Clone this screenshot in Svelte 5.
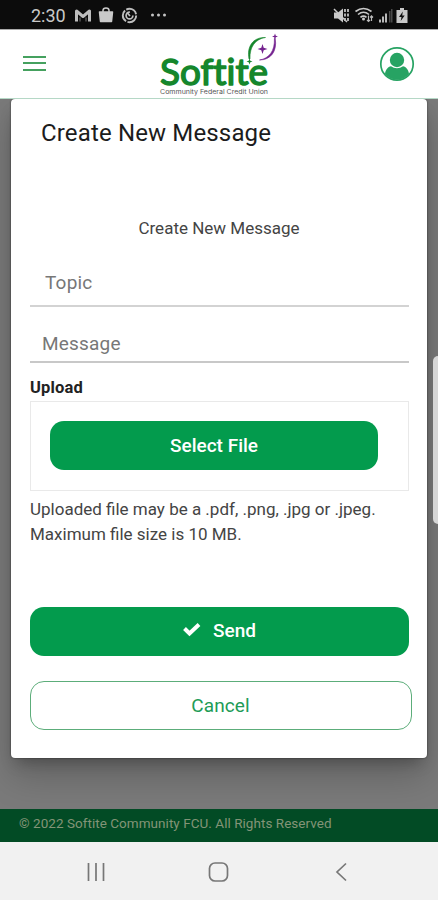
<script lang="ts">
  let topic = $state("");
  let message = $state("");
</script>

<div class="screen">
  <div class="status">
    <span class="clock">2:30</span>
    <svg class="left-icons" width="100" height="30" viewBox="0 0 100 30" aria-hidden="true">
      <path d="M3.500 21.500V11L10 16.500l6.500-5.500v10.500" fill="none" stroke="#bdbdbd" stroke-width="3" stroke-linejoin="round" />
      <path d="M7 21.500v-4M13 21.500v-4" fill="none" stroke="#777" stroke-width="1" />
      <path d="M26.500 12h13l-1 9.500h-11z" fill="#c9c9c9" stroke="#c9c9c9" stroke-width="1.500" stroke-linejoin="round" />
      <path d="M30 12v-1.500a3 2.500 0 0 1 6 0V12" fill="none" stroke="#c9c9c9" stroke-width="1.500" />
      <circle cx="56.500" cy="15.500" r="6.700" fill="none" stroke="#bdbdbd" stroke-width="1.900" stroke-dasharray="12.500 1.500" />
      <circle cx="56.500" cy="15.500" r="3.400" fill="none" stroke="#bdbdbd" stroke-width="1.700" stroke-dasharray="16 5.400" />
      <path d="M54 12.500l3 3.500" stroke="#bdbdbd" stroke-width="1.700" />
      <g fill="#c4c4c4">
        <circle cx="79.500" cy="15" r="1.500" />
        <circle cx="85.500" cy="15" r="1.500" />
        <circle cx="91.500" cy="15" r="1.500" />
      </g>
    </svg>
    <svg class="right-icons" width="80" height="30" viewBox="0 0 80 30" aria-hidden="true">
      <path d="M1 12.500h4l5-4v14l-5-4H1z" fill="#c9c9c9" />
      <path d="M1 9l13 13" stroke="#c9c9c9" stroke-width="1.500" />
      <path d="M12 9v13M15 9v13" stroke="#c0c0c0" stroke-width="1.800" stroke-dasharray="3 1.500" />
      <g fill="none" stroke="#c9c9c9" stroke-width="1.600">
        <path d="M22.500 11.500q8-6 16 0" />
        <path d="M25 14.500q5.500-4.500 11 0" />
        <path d="M27.500 17.300q3-2.500 6 0" />
      </g>
      <circle cx="30.500" cy="19" r="1.500" fill="#c9c9c9" />
      <path d="M35.500 15.500v6M38.500 16v5M34 20l1.500 1.500L37 20M37.200 17.500l1.300-1.500 1.500 1.500" fill="none" stroke="#bbb" stroke-width="1.200" />
      <path d="M46 22.500v-3h2v3zM49 22.500v-6h2v6zM52 22.500v-9h2v9z" fill="#b9b9b9" />
      <path d="M56 22.500V11h1.500v11.500zM58 22.500V9h1.500v13.500z" fill="#4a4a4a" />
      <path d="M67 8h4v2h3.500v13h-11V10H67z" fill="#c9c9c9" />
      <path d="M69.800 11.500L66 17h2.500l-.8 4 4-5.500h-2.500z" fill="#111" />
    </svg>
  </div>

  <header>
    <button class="menu" aria-label="Menu">
      <i></i><i></i><i></i>
    </button>
    <svg class="logo" width="122" height="68" viewBox="0 0 122 68" role="img" aria-label="Softite Community Federal Credit Union">
      <text class="brand" x="2" y="54.500" textLength="108" lengthAdjust="spacingAndGlyphs">Softite</text>
      <text class="tagline" x="2" y="63.500" textLength="108" lengthAdjust="spacingAndGlyphs">Community Federal Credit Union</text>
      <path d="M91 29C88.500 16 95.500 7 107.500 7.500 97.500 9 91.500 16.500 92 29z" fill="#15872c" stroke="#15872c" stroke-width=".6" />
      <path d="M117.200 8.500C119.500 21.500 112.500 30 101.500 30 111 28.500 117 21 116.400 8.500z" fill="#74228f" stroke="#74228f" stroke-width=".6" />
      <path d="M104.500 14l1.200 3.800 3.800 1.200-3.800 1.200-1.200 3.800-1.200-3.800-3.800-1.200 3.800-1.200z" fill="#74228f" />
      <path d="M117 3.500l.8 2.200 2.200.8-2.200.8-.8 2.200-.8-2.200-2.200-.8 2.200-.8z" fill="#74228f" />
      <path d="M91.500 28.500l.8 2.200 2.200.8-2.200.8-.8 2.200-.8-2.200-2.200-.8 2.200-.8z" fill="#15872c" />
    </svg>
    <svg class="avatar" width="36" height="36" viewBox="0 0 36 36" aria-hidden="true">
      <circle cx="18" cy="18" r="16.200" fill="#fff" stroke="#27a363" stroke-width="1.700" />
      <circle cx="18" cy="14" r="7.200" fill="#27a363" />
      <path d="M6 28c.5-4.500 3-7 6-7.700 3.500 2.600 8.500 2.600 12 0 3 .7 5.500 3.200 6 7.700a15.500 15.500 0 0 1-24 0z" fill="#27a363" />
    </svg>
  </header>

  <main>
    <div class="modal" role="dialog" aria-label="Create New Message">
      <h1>Create New Message</h1>
      <h2>Create New Message</h2>
      <input class="topic" placeholder="Topic" bind:value={topic} />
      <input class="message" placeholder="Message" bind:value={message} />
      <div class="label">Upload</div>
      <div class="upload">
        <button class="primary">Select File</button>
      </div>
      <p class="hint">Uploaded file may be a .pdf, .png, .jpg or .jpeg.<br />Maximum file size is 10 MB.</p>
      <button class="primary send">
        <svg width="20" height="16" viewBox="0 0 20 16" aria-hidden="true">
          <path d="M2.500 5.500l5 5L17 1.500" fill="none" stroke="#fff" stroke-width="4" />
        </svg>
        <span>Send</span>
      </button>
      <button class="cancel">Cancel</button>
    </div>
    <div class="handle"></div>
  </main>

  <footer>© 2022 Softite Community FCU. All Rights Reserved</footer>

  <nav>
    <svg width="438" height="58" viewBox="0 0 438 58" fill="none" stroke="#777" aria-hidden="true">
      <path d="M88.500 21v18M96 21v18M103.500 21v18" stroke-width="1.700" />
      <rect x="209.500" y="21" width="18" height="18" rx="5.500" stroke-width="1.700" />
      <path d="M346 21.500l-9 8.500 9 8.500" stroke-width="1.700" />
    </svg>
  </nav>
</div>

<style>
  :global(body) {
    margin: 0;
  }
  .screen {
    width: 438px;
    height: 900px;
    display: flex;
    flex-direction: column;
    overflow: hidden;
    font-family: Roboto, sans-serif;
    color: #222;
  }
  .screen * {
    box-sizing: border-box;
  }
  button, input {
    font-family: inherit;
    border: 0;
    padding: 0;
    background: none;
  }
  .status {
    height: 29px;
    flex: none;
    display: flex;
    background: #0c0c0c;
  }
  .clock {
    width: 41px;
    margin-left: 31px;
    font-size: 18px;
    line-height: 32px;
    color: #c9c9c9;
    white-space: nowrap;
  }
  .right-icons {
    margin-left: auto;
    margin-right: 25px;
  }
  .status svg {
    flex: none;
  }
  .left-icons {
    margin-left: 1px;
  }
  header {
    height: 70px;
    flex: none;
    display: flex;
    align-items: center;
    background: #fff;
    border-top: 1px solid #aaa;
    border-bottom: 1.5px solid #b5d8c6;
  }
  .menu {
    width: 23px;
    margin-left: 23px;
    display: flex;
    flex-direction: column;
    gap: 4.500px;
    position: relative;
    top: -1px;
  }
  .menu i {
    height: 2px;
    background: #45a15f;
  }
  .logo {
    margin-left: 112px;
  }
  .brand {
    font-family: Lato, sans-serif;
    font-size: 37px;
    font-weight: 400;
    font-variant-ligatures: none;
    fill: #15872c;
    stroke: #15872c;
    stroke-width: 1.5px;
    stroke-linejoin: round;
  }
  .tagline {
    font-family: Inter, sans-serif;
    font-size: 6.500px;
    fill: #555;
  }
  .avatar {
    margin-left: auto;
    margin-right: 23px;
  }
  main {
    height: 710px;
    flex: none;
    position: relative;
    overflow: hidden;
    background: #7a7a7a;
  }
  .modal {
    width: 416px;
    height: 659px;
    margin-left: 11px;
    padding: 0 19px;
    display: flex;
    flex-direction: column;
    align-items: flex-start;
    background: #fff;
    border-radius: 4px;
    box-shadow: 0 0 2px rgba(0, 0, 0, .6), 0 9px 14px -5px rgba(0, 0, 0, .25), 0 18px 36px rgba(0, 0, 0, .2);
  }
  h1 {
    margin: 20px 0 0 11px;
    font-size: 24px;
    line-height: 28px;
    font-weight: 400;
    letter-spacing: .15px;
    color: #1c1c1c;
  }
  h2 {
    align-self: center;
    margin: 71px 0 0;
    font-size: 17px;
    line-height: 20px;
    font-weight: 400;
    color: #444;
  }
  input {
    width: 379px;
    font-size: 19px;
    letter-spacing: .2px;
    outline: none;
  }
  input::placeholder {
    color: #777;
    opacity: 1;
  }
  .topic {
    height: 48px;
    margin-top: 21px;
    padding: 1px 15px 0;
    border-bottom: 2px solid #d3d3d3;
  }
  .message {
    height: 38px;
    margin-top: 18px;
    padding: 0 12px;
    border-bottom: 2px solid #c8c8c8;
  }
  .label {
    margin-top: 15px;
    font-size: 16.500px;
    line-height: 20px;
    font-weight: 700;
    letter-spacing: .15px;
  }
  .upload {
    width: 379px;
    height: 90px;
    margin-top: 3px;
    padding: 19px 19px;
    border: 1.5px solid #e9e9e9;
  }
  .primary {
    width: 328px;
    height: 49px;
    border-radius: 14px;
    background: #039b4d;
    color: #fff;
    font-size: 19px;
    font-weight: 500;
  }
  .hint {
    margin: 6px 0 0;
    font-size: 17px;
    line-height: 25px;
    color: #444;
    white-space: nowrap;
  }
  .send {
    width: 379px;
    margin-top: 60px;
    padding: 0 1px 2px 0;
    display: flex;
    align-items: center;
    justify-content: center;
    gap: 11px;
  }
  .cancel {
    width: 382px;
    height: 49px;
    margin-top: 25px;
    padding-right: 1px;
    border: 1px solid #5cad7a;
    border-radius: 14px;
    color: #219b56;
    font-size: 19px;
    letter-spacing: .1px;
  }
  .handle {
    position: absolute;
    right: -6px;
    top: 257px;
    width: 11px;
    height: 168px;
    border-radius: 5px;
    background: #d6d6d6;
  }
  footer {
    height: 33px;
    flex: none;
    padding-left: 19px;
    background: #024b25;
    color: #829477;
    font-size: 13.500px;
    line-height: 29px;
    letter-spacing: .04px;
    white-space: nowrap;
  }
  nav {
    height: 58px;
    flex: none;
    background: #f1f1f1;
  }
</style>
